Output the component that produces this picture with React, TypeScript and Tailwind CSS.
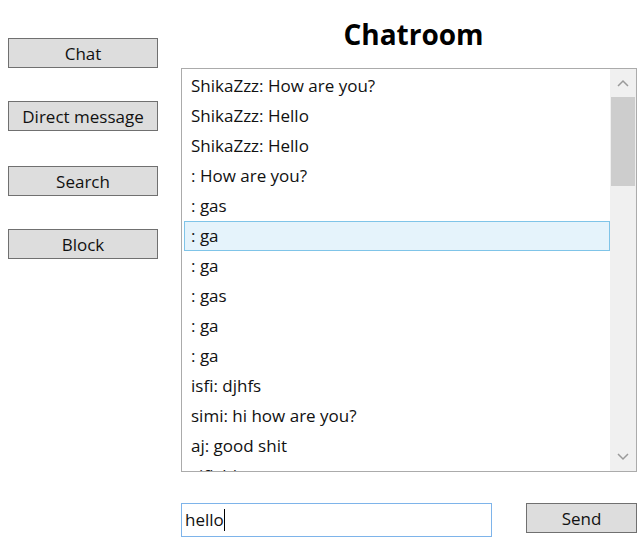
const messages = [
  "ShikaZzz: How are you?",
  "ShikaZzz: Hello",
  "ShikaZzz: Hello",
  ": How are you?",
  ": gas",
  ": ga",
  ": ga",
  ": gas",
  ": ga",
  ": ga",
  "isfi: djhfs",
  "simi: hi how are you?",
  "aj: good shit",
  "sifi: hi",
];

const SELECTED = 5;

const SideButton = ({ label, extra = "" }: { label: string; extra?: string }) => (
  <button
    className={`w-[150px] h-[30px] bg-[#dddddd] border border-[#707070] text-[17px] leading-none text-[#111] ${extra}`}
  >
    {label}
  </button>
);

const App = () => {
  return (
    <div
      className="w-[639px] h-[549px] bg-white flex text-[#111]"
      style={{ fontFamily: '"Open Sans", "Noto Sans", sans-serif' }}
    >
      {/* Left menu */}
      <div className="flex flex-col gap-[33px] pl-2 pt-[38px] w-[181px]">
        <SideButton label="Chat" />
        <SideButton label="Direct message" />
        <SideButton label="Search" extra="mt-[2px]" />
        <SideButton label="Block" />
      </div>

      {/* Chat area */}
      <div className="flex flex-col w-[456px]">
        <h1 className="h-[68px] pt-[14px] text-center text-[28px] font-bold leading-[40px] pl-[9px] text-black">
          Chatroom
        </h1>

        <div className="h-[404px] border border-[#ababab] flex">
          <div className="flex-1 overflow-hidden pt-[2px] pl-[2px]">
            {messages.map((m, i) => (
              <div
                key={i}
                className={
                  i === SELECTED
                    ? "h-[30px] flex items-center pl-[6px] pb-[1px] text-[17px] bg-[#e5f3fb] border border-[#7fc4e8]"
                    : "h-[30px] flex items-center pl-[7px] pb-[1px] text-[17px]"
                }
              >
                {m}
              </div>
            ))}
          </div>

          {/* Scrollbar */}
          <div className="w-[26px] bg-[#f0f0f0] flex flex-col">
            <div className="h-[28px] flex items-center justify-center">
              <svg width="12" height="8" viewBox="0 0 12 8">
                <path d="M1 7 L6 2 L11 7" fill="none" stroke="#9a9a9a" strokeWidth="1.5" />
              </svg>
            </div>
            <div className="h-[89px] bg-[#cdcdcd] mx-[1px]" />
            <div className="flex-1" />
            <div className="h-[28px] flex items-center justify-center">
              <svg width="12" height="8" viewBox="0 0 12 8">
                <path d="M1 1 L6 6 L11 1" fill="none" stroke="#9a9a9a" strokeWidth="1.5" />
              </svg>
            </div>
          </div>
        </div>

        {/* Input row */}
        <div className="flex items-start justify-between mt-[31px]">
          <div className="w-[311px] h-[34px] border border-[#7eb4ea] flex items-center pl-[3px] text-[17px]">
            <span>hello</span>
            <span className="w-px h-[22px] bg-black" />
          </div>
          <button className="w-[111px] h-[30px] bg-[#dddddd] border border-[#707070] text-[17px] leading-none text-[#111]">
            Send
          </button>
        </div>
      </div>
    </div>
  );
};

export default App;
